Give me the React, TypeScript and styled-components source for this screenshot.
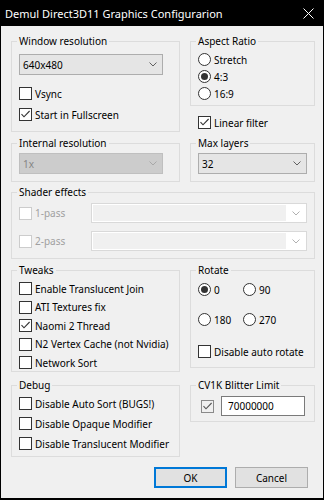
import React from 'react';
import styled, { createGlobalStyle } from 'styled-components';

const GlobalStyle = createGlobalStyle`
  html, body {
    margin: 0;
    padding: 0;
    background: #000;
  }
  body {
    font-family: "Noto Sans", "Liberation Sans", sans-serif;
    font-size: 10px;
    color: #000;
  }
`;

const Window = styled.div`
  width: 324px;
  height: 500px;
  box-sizing: border-box;
  background: #000;
  padding: 0 1px 2px 1px;
  display: flex;
  flex-direction: column;
`;

const TitleBar = styled.div`
  height: 26px;
  flex-shrink: 0;
  display: flex;
  align-items: center;
  justify-content: space-between;
  padding: 0 9px 0 4px;
  color: #fff;
  font-size: 11px;
`;

const Body = styled.div`
  flex: 1;
  background: #f0f0f0;
  padding: 8px 8px 0 10px;
  display: flex;
  flex-direction: column;
`;

const Row = styled.div<{ $mt?: number }>`
  display: grid;
  grid-template-columns: 169px 125px;
  column-gap: 10px;
  align-items: start;
  margin-top: ${p => p.$mt ?? 0}px;
`;

const Column = styled.div`
  display: flex;
  flex-direction: column;
`;

const Group = styled.fieldset<{ $h: number; $span?: boolean }>`
  margin: 0;
  min-width: 0;
  box-sizing: border-box;
  height: ${p => p.$h}px;
  border: 1px solid #dcdcdc;
  padding: 0 7px 0 7px;
  grid-column: ${p => (p.$span ? '1 / span 2' : 'auto')};
`;

const Legend = styled.legend`
  padding: 0 2px;
  margin-left: -2px;
  line-height: 15px;
  font-size: 10px;
`;

const Stack = styled.div<{ $mt: number; $gap: number; $ml?: number }>`
  display: flex;
  flex-direction: column;
  gap: ${p => p.$gap}px;
  margin-top: ${p => p.$mt}px;
  margin-left: ${p => p.$ml ?? 0}px;
`;

const Item = styled.label<{ $disabled?: boolean }>`
  display: flex;
  align-items: center;
  gap: 3px;
  height: 13px;
  white-space: nowrap;
  color: ${p => (p.$disabled ? '#a0a0a0' : '#000')};
`;

const BoxFrame = styled.span<{ $disabled?: boolean; $muted?: boolean }>`
  width: 13px;
  height: 13px;
  box-sizing: border-box;
  flex-shrink: 0;
  border: 1px solid ${p => (p.$disabled ? '#cccccc' : p.$muted ? '#8a8a8a' : '#333333')};
  background: ${p => (p.$muted ? '#f0f0f0' : '#fff')};
  display: flex;
  align-items: center;
  justify-content: center;
`;

const RadioFrame = styled.span<{ $on?: boolean }>`
  width: 13px;
  height: 13px;
  box-sizing: border-box;
  flex-shrink: 0;
  border-radius: 50%;
  border: 1px solid #333333;
  background: #fff;
  display: flex;
  align-items: center;
  justify-content: center;
  &::after {
    content: '';
    width: 7px;
    height: 7px;
    border-radius: 50%;
    background: #333333;
    display: ${p => (p.$on ? 'block' : 'none')};
  }
`;

const Select = styled.div<{ $w: number; $mt: number; $disabled?: boolean }>`
  width: ${p => p.$w}px;
  height: 21px;
  margin-top: ${p => p.$mt}px;
  box-sizing: border-box;
  border: 1px solid ${p => (p.$disabled ? '#bfbfbf' : '#adadad')};
  background: ${p => (p.$disabled ? '#cccccc' : '#e5e5e5')};
  color: ${p => (p.$disabled ? '#858585' : '#000')};
  display: flex;
  align-items: center;
  justify-content: space-between;
  padding: 0 5px 0 3px;
`;

const ShaderRow = styled.div`
  display: grid;
  grid-template-columns: 72px 1fr;
  align-items: center;
  height: 20px;
`;

const Combo = styled.div`
  height: 20px;
  box-sizing: border-box;
  border: 1px solid #d9d9d9;
  background: #fff;
  padding: 1px;
  display: flex;
  align-items: stretch;
`;

const ComboField = styled.div`
  flex: 1;
  background: #f0f0f0;
`;

const ComboArrow = styled.div`
  width: 19px;
  display: flex;
  align-items: center;
  justify-content: center;
`;

const RadioGrid = styled.div`
  display: grid;
  grid-template-columns: 45px 45px;
  row-gap: 17px;
  margin-top: 5px;
`;

const LimitRow = styled.div`
  display: flex;
  align-items: center;
  gap: 7px;
  margin: 3px 0 0 3px;
`;

const TextInput = styled.div`
  width: 84px;
  height: 20px;
  box-sizing: border-box;
  border: 1px solid #7a7a7a;
  background: #fff;
  padding-left: 6px;
  display: flex;
  align-items: center;
`;

const Footer = styled.div`
  display: flex;
  justify-content: flex-end;
  gap: 8px;
  margin-top: 10px;
  padding-right: 7px;
`;

const Button = styled.button<{ $default?: boolean }>`
  width: 73px;
  height: 21px;
  box-sizing: border-box;
  margin: 0;
  padding: 0;
  font-family: inherit;
  font-size: 10px;
  color: #000;
  background: #e1e1e1;
  border: 1px solid ${p => (p.$default ? '#0078d7' : '#adadad')};
  box-shadow: ${p => (p.$default ? 'inset 0 0 0 1px #0078d7' : 'none')};
`;

const Chevron = ({ color = '#606060' }: { color?: string }) => (
  <svg width="8" height="5" viewBox="0 0 8 5">
    <path d="M0.5 0.5 L4 4 L7.5 0.5" fill="none" stroke={color} strokeWidth="1" />
  </svg>
);

const Check = ({ color = '#333' }: { color?: string }) => (
  <svg width="11" height="11" viewBox="0 0 11 11">
    <path d="M1.5 5.2 L4 7.8 L9.6 2" fill="none" stroke={color} strokeWidth="1.1" />
  </svg>
);

const CheckBox = ({ label, checked, disabled }: { label: string; checked?: boolean; disabled?: boolean }) => (
  <Item $disabled={disabled}>
    <BoxFrame $disabled={disabled}>{checked && <Check />}</BoxFrame>
    {label}
  </Item>
);

const RadioBtn = ({ label, on }: { label: string; on?: boolean }) => (
  <Item>
    <RadioFrame $on={on} />
    {label}
  </Item>
);

export default function App() {
  return (
    <>
      <GlobalStyle />
      <Window>
        <TitleBar>
          <span>Demul Direct3D11 Graphics Configurarion</span>
          <svg width="11" height="11" viewBox="0 0 11 11">
            <path d="M0.5 0.5 L10.5 10.5 M10.5 0.5 L0.5 10.5" stroke="#fff" strokeWidth="1" />
          </svg>
        </TitleBar>
        <Body>
          <Row>
            <Group $h={98}>
              <Legend>Window resolution</Legend>
              <Select $w={144} $mt={5}>
                640x480
                <Chevron />
              </Select>
              <Stack $mt={12} $gap={8}>
                <CheckBox label="Vsync" />
                <CheckBox label="Start in Fullscreen" checked />
              </Stack>
            </Group>
            <Column>
              <Group $h={72}>
                <Legend>Aspect Ratio</Legend>
                <Stack $mt={4} $gap={4}>
                  <RadioBtn label="Stretch" />
                  <RadioBtn label="4:3" on />
                  <RadioBtn label="16:9" />
                </Stack>
              </Group>
              <Stack $mt={10} $gap={0} $ml={8}>
                <CheckBox label="Linear filter" checked />
              </Stack>
            </Column>
          </Row>

          <Row $mt={4}>
            <Group $h={46}>
              <Legend>Internal resolution</Legend>
              <Select $w={144} $mt={2} $disabled>
                1x
                <Chevron color="#a8a8a8" />
              </Select>
            </Group>
            <Group $h={46}>
              <Legend>Max layers</Legend>
              <Select $w={109} $mt={2}>
                32
                <Chevron />
              </Select>
            </Group>
          </Row>

          <Row $mt={3}>
            <Group $h={74} $span>
              <Legend>Shader effects</Legend>
              <Stack $mt={3} $gap={8}>
                {['1-pass', '2-pass'].map(pass => (
                  <ShaderRow key={pass}>
                    <CheckBox label={pass} disabled />
                    <Combo>
                      <ComboField />
                      <ComboArrow>
                        <Chevron color="#b0b0b0" />
                      </ComboArrow>
                    </Combo>
                  </ShaderRow>
                ))}
              </Stack>
            </Group>
          </Row>

          <Row $mt={4}>
            <Group $h={109}>
              <Legend>Tweaks</Legend>
              <Stack $mt={4} $gap={5.5}>
                <CheckBox label="Enable Translucent Join" />
                <CheckBox label="ATI Textures fix" />
                <CheckBox label="Naomi 2 Thread" checked />
                <CheckBox label="N2 Vertex Cache (not Nvidia)" />
                <CheckBox label="Network Sort" />
              </Stack>
            </Group>
            <Group $h={105}>
              <Legend>Rotate</Legend>
              <RadioGrid>
                <RadioBtn label="0" on />
                <RadioBtn label="90" />
                <RadioBtn label="180" />
                <RadioBtn label="270" />
              </RadioGrid>
              <Stack $mt={19} $gap={0}>
                <CheckBox label="Disable auto rotate" />
              </Stack>
            </Group>
          </Row>

          <Row $mt={6}>
            <Group $h={79}>
              <Legend>Debug</Legend>
              <Stack $mt={4} $gap={7}>
                <CheckBox label="Disable Auto Sort (BUGS!)" />
                <CheckBox label="Disable Opaque Modifier" />
                <CheckBox label="Disable Translucent Modifier" />
              </Stack>
            </Group>
            <Group $h={44}>
              <Legend>CV1K Blitter Limit</Legend>
              <LimitRow>
                <BoxFrame $muted>
                  <Check color="#555" />
                </BoxFrame>
                <TextInput>70000000</TextInput>
              </LimitRow>
            </Group>
          </Row>

          <Footer>
            <Button $default>OK</Button>
            <Button>Cancel</Button>
          </Footer>
        </Body>
      </Window>
    </>
  );
}
